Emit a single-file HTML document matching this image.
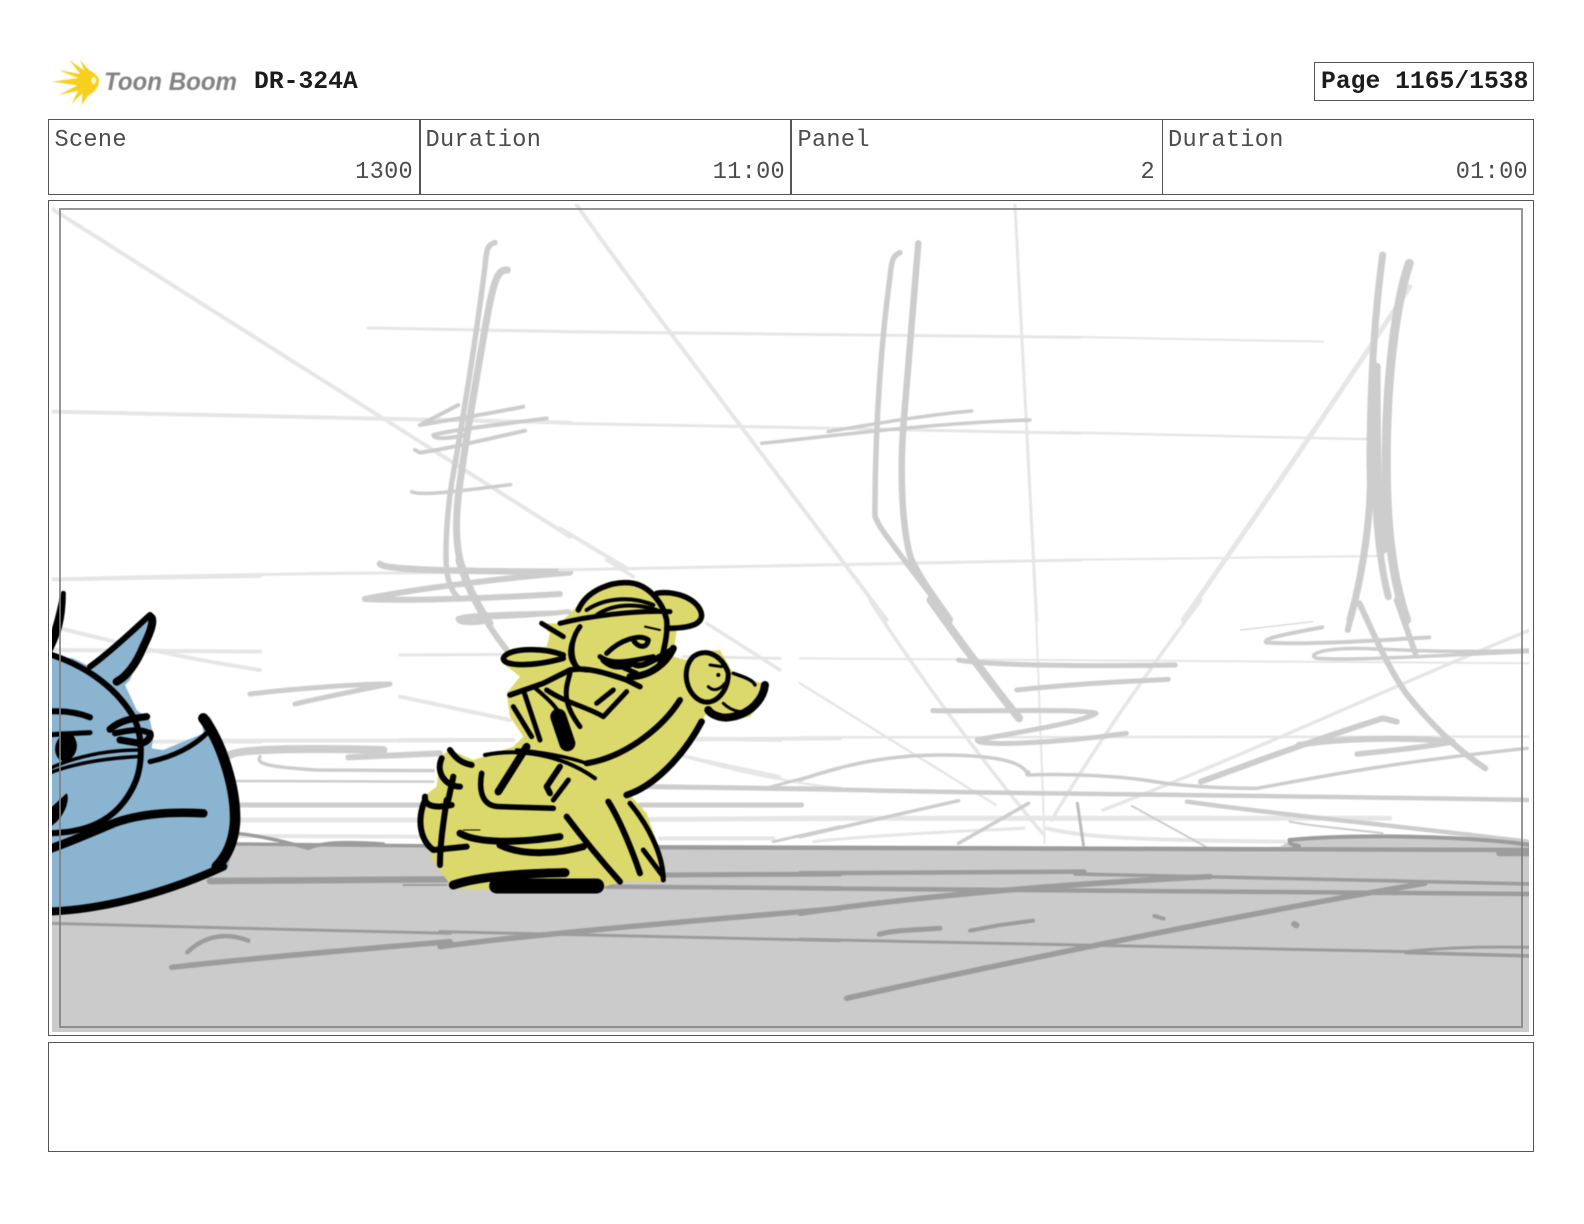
<!DOCTYPE html>
<html><head><meta charset="utf-8"><title>Storyboard page</title>
<style>
html,body{margin:0;padding:0;background:#fff;}
body{width:1584px;height:1224px;position:relative;overflow:hidden;font-family:"Liberation Mono",monospace;}
.box{position:absolute;border:1.5px solid #555;box-sizing:border-box;}
.t{position:absolute;font-size:23.6px;line-height:28px;color:#4c4c4c;white-space:pre;letter-spacing:.3px;}
.b{position:absolute;font-size:24.7px;line-height:28px;font-weight:bold;color:#1c1c1c;white-space:pre;}
.r{text-align:right;}
#art{position:absolute;left:52px;top:204px;width:1477px;height:828px;overflow:hidden;}
#art svg{position:absolute;left:-52px;top:-204px;filter:blur(.55px);}
svg path,svg ellipse,svg circle{vector-effect:non-scaling-stroke;}
.l{fill:none;stroke:#e6e6e6;stroke-linecap:round;stroke-linejoin:round;}
.m{fill:none;stroke:#cdcdcd;stroke-linecap:round;stroke-linejoin:round;}
.d{fill:none;stroke:#9c9c9c;stroke-linecap:round;stroke-linejoin:round;}
.k{fill:none;stroke:#000;stroke-linecap:round;stroke-linejoin:round;}
</style></head>
<body>

<svg style="position:absolute;left:0;top:0;filter:blur(.4px)" width="260" height="115" viewBox="0 0 260 115">
<g transform="translate(45 50) scale(.3333)">
<path fill="#f7cf1d" d="M22 95 L100 84 L40 60 L106 72 L73 30 L118 62 L105 30 L132 60 C152 70 162 82 162 92 C162 112 148 128 130 136 L110 165 L112 130 L80 160 L100 122 L40 135 L98 106 Z"/>
<ellipse cx="146" cy="92" rx="7" ry="11" fill="#fff6cc"/>
</g>
<text x="104" y="90" font-family="Liberation Sans" font-style="italic" font-weight="bold" font-size="25" fill="#828282" textLength="133" lengthAdjust="spacingAndGlyphs">Toon Boom</text>
</svg>

<div class="b" style="left:254px;top:68px;">DR-324A</div>
<div class="box" style="left:1314px;top:62px;width:219.5px;height:39px;"></div>
<div class="b" style="left:1321px;top:68px;">Page 1165/1538</div>

<div class="box" style="left:48px;top:119px;width:1486px;height:76px;"></div>
<div class="box" style="left:419px;top:119px;width:1.5px;height:76px;border:0;background:#555;"></div>
<div class="box" style="left:790px;top:119px;width:1.5px;height:76px;border:0;background:#555;"></div>
<div class="box" style="left:1161.5px;top:119px;width:1.5px;height:76px;border:0;background:#555;"></div>

<div class="t" style="left:54.5px;top:127px;">Scene</div>
<div class="t" style="left:425.5px;top:127px;">Duration</div>
<div class="t" style="left:797.5px;top:127px;">Panel</div>
<div class="t" style="left:1168px;top:127px;">Duration</div>
<div class="t r" style="left:219px;width:194px;top:158.5px;">1300</div>
<div class="t r" style="left:590px;width:195px;top:158.5px;">11:00</div>
<div class="t r" style="left:961px;width:194px;top:158.5px;">2</div>
<div class="t r" style="left:1332px;width:196px;top:158.5px;">01:00</div>

<div class="box" style="left:48px;top:200px;width:1486px;height:836px;"></div>

<div id="art">
<svg width="1584" height="1224" viewBox="0 0 1584 1224">
<g transform="translate(50 200) scale(.3333)">
<g class="l">
<path stroke-width="4" d="M8 28 L1560 1010"/>
<path stroke-width="4" d="M6 635 C400 645 800 655 1560 668"/>
<path stroke-width="3" d="M955 384 C1200 388 1400 392 1560 395"/>
<path stroke-width="3" d="M8 1138 C400 1125 800 1120 1190 1118"/>
</g>
<g class="m">
<path stroke-width="5.5" d="M1335 128 C1310 135 1310 150 1305 200 C1280 400 1240 650 1205 850 C1190 950 1185 1050 1190 1110 C1195 1150 1210 1180 1222 1190"/>
<path stroke-width="7" d="M1372 210 C1340 205 1330 260 1315 330 C1285 500 1250 700 1230 850 C1215 950 1215 1050 1240 1110 C1255 1160 1290 1230 1320 1270"/>
<path stroke-width="4" d="M1225 615 L1110 675 C1200 660 1350 635 1420 620"/>
<path stroke-width="4" d="M1490 655 C1380 670 1200 690 1150 705 C1150 720 1200 715 1250 705"/>
<path stroke-width="4" d="M1425 692 C1300 720 1200 745 1110 758 L1095 750"/>
<path stroke-width="3.5" d="M1085 875 C1110 890 1250 870 1382 854"/>
<path stroke-width="6.5" d="M990 1092 C1000 1112 1300 1115 1560 1115"/>
<path stroke-width="6" d="M1560 1118 C1400 1130 1100 1165 945 1197 C1100 1205 1400 1190 1530 1182"/>
<path stroke-width="3" d="M1560 1235 C1400 1240 1230 1240 1225 1255"/>
</g>
</g>
<g transform="translate(560 200) scale(.3333)">
<g class="l">
<path stroke-width="4" d="M50 15 C200 230 500 620 980 1260"/>
<path stroke-width="3" d="M0 395 L1560 412"/>
<path stroke-width="3" d="M0 670 L560 680 L1560 700"/>
<path stroke-width="3" d="M0 1110 L1560 1080"/>
<path stroke-width="4" d="M0 985 L200 1105"/>
<path stroke-width="3" d="M1365 15 L1430 1260"/>
</g>
<g class="m">
<path stroke-width="5.5" d="M1020 158 C1000 165 995 180 990 230 C965 420 945 650 945 950 L960 980 C1000 1040 1080 1140 1170 1260"/>
<path stroke-width="6.5" d="M1075 130 C1065 250 1050 450 1030 680 C1015 900 1040 1060 1060 1090 C1090 1150 1130 1200 1170 1260"/>
<path stroke-width="3.5" d="M605 730 C800 710 1100 670 1410 660"/>
<path stroke-width="3.5" d="M805 695 C950 670 1100 645 1235 633"/>
</g>
</g>
<g transform="translate(1060 200) scale(.3333)">
<g class="l">
<path stroke-width="2" d="M0 410 L790 425"/>
<path stroke-width="2.5" d="M0 697 L930 718"/>
<path stroke-width="2" d="M0 1080 L950 1068"/>
<path stroke-width="5" d="M1050 260 C800 640 600 930 370 1260"/>
</g>
<g class="m">
<path stroke-width="7" d="M968 165 C950 300 930 500 930 800 C935 900 920 1080 870 1260"/>
<path stroke-width="9" d="M1048 190 C1010 300 985 500 980 700 C975 900 985 1100 1040 1260"/>
<path stroke-width="7" d="M940 700 C945 900 950 1050 985 1190"/>
<path stroke-width="8" d="M950 500 C950 700 950 900 970 1050"/>
</g>
</g>
<g transform="translate(40 570) scale(.3333)" class="l">
<path stroke-width="4" d="M37 28 L660 18"/>
<path stroke-width="4" d="M60 175 C200 210 400 260 660 300"/>
<path stroke-width="4" d="M40 240 L660 245"/>
<path stroke-width="4" d="M340 515 L660 515"/>
</g>
<path class="m" stroke-width="5" d="M250 694 C300 688 360 684 390 684 C360 690 320 698 295 704"/>
<g transform="translate(400 560) scale(.3333)">
<g class="l">
<path stroke-width="3" d="M0 285 L310 283"/>
<path stroke-width="3" d="M850 290 L1140 295"/>
<path stroke-width="4" d="M0 540 L340 540"/>
<path stroke-width="4" d="M870 535 L1140 540"/>
<path stroke-width="4" d="M0 410 L330 480"/>
<path stroke-width="3" d="M860 590 L1140 650"/>
<path stroke-width="3.5" d="M620 0 L700 50"/>
<path stroke-width="3.5" d="M920 190 L1140 330"/>
</g>
<g class="m">
<path stroke-width="5" d="M505 155 C380 170 250 170 175 175 C170 190 220 190 250 185"/>
<path stroke-width="6" d="M175 0 C200 90 250 180 320 270"/>
</g>
</g>
<g transform="translate(50 720) scale(.3333)">
<g class="l">
<path stroke-width="4" d="M500 62 L1200 62"/>
<path stroke-width="5" d="M560 300 L1120 300"/>
<path stroke-width="4" d="M560 348 L1120 350"/>
</g>
<g class="m">
<path stroke-width="8" d="M540 105 C560 85 800 85 1000 90"/>
<path stroke-width="6" d="M895 112 L1170 100"/>
<path stroke-width="3.5" d="M630 110 C620 130 640 140 800 150 L1150 152"/>
<path stroke-width="2.5" d="M560 183 L1150 185"/>
<path stroke-width="5" d="M560 255 L1120 255"/>
</g>
</g>
<g transform="translate(440 730) scale(.3333)">
<g class="l">
<path stroke-width="4" d="M770 28 L1200 25"/>
<path stroke-width="2.5" d="M730 78 C900 130 1100 165 1200 175"/>
<path stroke-width="5" d="M630 268 L1200 265"/>
<path stroke-width="4" d="M660 325 L1000 325"/>
</g>
<g class="m">
<path stroke-width="5" d="M620 170 L1200 178"/>
<path stroke-width="3" d="M965 178 L1200 115"/>
<path stroke-width="5" d="M600 225 L1085 225"/>
<path stroke-width="3" d="M1000 335 L1200 290"/>
</g>
</g>
<g transform="translate(800 600) scale(.4662 .3333)">
<g class="l">
<path stroke-width="3.5" d="M150 0 C250 220 400 500 520 700"/>
<path stroke-width="2.5" d="M0 250 L420 615"/>
<path stroke-width="2" d="M505 0 L525 730"/>
<path stroke-width="3.5" d="M860 0 C780 150 640 420 540 660"/>
<path stroke-width="3.5" d="M1566 90 C1300 240 950 470 650 630"/>
<path stroke-width="2" d="M0 175 L1566 190"/>
<path stroke-width="2.5" d="M0 412 L1566 410"/>
<path stroke-width="5" d="M0 655 L1265 655"/>
<path stroke-width="3" d="M30 725 C200 700 400 690 480 685"/>
<path stroke-width="4" d="M530 685 C600 710 700 720 1040 725"/>
</g>
<g class="m">
<path stroke-width="8" d="M280 0 C320 80 420 270 470 355"/>
<path stroke-width="5" d="M340 180 C400 195 600 200 805 195"/>
<path stroke-width="5" d="M465 270 C600 250 700 245 790 238"/>
<path stroke-width="5" d="M285 332 C400 335 600 325 635 340 C600 370 450 400 380 420 C380 440 550 430 700 400"/>
<path stroke-width="3.5" d="M0 540 C100 490 200 465 300 465 C400 465 470 480 485 515 C500 515 480 525 490 525 C600 520 700 530 760 545 C830 560 900 565 980 565 C1100 535 1250 490 1560 445"/>
<path stroke-width="4.5" d="M0 565 C300 580 700 580 1566 600"/>
<path stroke-width="4.5" d="M830 605 C1000 640 1300 680 1560 725"/>
<path stroke-width="2" d="M1050 665 C1100 680 1200 690 1250 700"/>
<path stroke-width="3.5" d="M0 710 L340 602"/>
<path stroke-width="3.5" d="M340 730 L490 610"/>
<path stroke-width="3" stroke="#bbb" d="M595 610 L608 735"/>
<path stroke-width="2" d="M712 618 L870 740"/>
<path stroke-width="6" d="M1200 10 C1230 100 1260 200 1300 280 C1340 350 1400 440 1470 505"/>
<path stroke-width="6" d="M1190 0 L1175 90"/>
<path stroke-width="6" d="M1280 0 L1320 160"/>
<path stroke-width="4" d="M1120 82 C1050 100 990 115 1000 128 C1100 135 1250 120 1350 112"/>
<path stroke-width="1" d="M945 90 L1100 65"/>
<path stroke-width="3.5" d="M1566 150 C1400 160 1300 150 1200 145 C1100 145 1090 170 1110 175 C1200 182 1300 170 1566 155"/>
<path stroke-width="6" d="M860 545 C950 500 1080 430 1250 355 L1280 365"/>
<path stroke-width="6" d="M1070 435 C1150 415 1300 410 1400 425"/>
<path stroke-width="5.5" d="M1195 462 C1250 455 1350 440 1400 425"/>
</g>
</g>
<path fill="#cbcbcb" d="M40 845 L1540 849 L1540 1040 L40 1040 Z"/>
<path fill="#cbcbcb" transform="translate(800 600) scale(.4662 .3333)" d="M1030 740 L1060 715 C1200 700 1450 710 1566 730 L1566 750 Z"/>
<g transform="translate(800 600) scale(.4662 .3333)" class="d">
<path stroke-width="4.5" d="M-800 740 L1566 750"/>
<path stroke-width="4.5" d="M0 820 L610 815"/>
<path stroke-width="3.5" d="M590 822 C900 830 1300 845 1566 852"/>
<path stroke-width="5.5" d="M0 940 C300 880 600 850 880 830"/>
<path stroke-width="4.5" d="M0 865 C500 870 1000 875 1566 882"/>
<path stroke-width="5.5" d="M100 1195 C500 1070 1000 930 1340 850"/>
<path stroke-width="3" d="M0 1018 C500 1030 1000 1050 1300 1055 C1400 1040 1500 1040 1566 1042"/>
<path stroke-width="3.5" d="M1300 1058 L1566 1068"/>
<path stroke-width="5" d="M170 1003 C200 990 250 990 300 985"/>
<path stroke-width="4" d="M365 992 L430 975 L500 962"/>
<path stroke-width="4" d="M760 948 L780 956"/>
<path stroke-width="6" d="M1060 972 L1065 976"/>
<path stroke-width="4" d="M1566 735 C1450 710 1200 700 1050 720 C1050 735 1060 735 1070 738"/>
<path stroke-width="6" d="M1500 760 L1566 760"/>
</g>
<g transform="translate(50 720) scale(.3333)" class="d">
<path stroke-width="3.5" d="M560 340 C650 350 720 370 775 385 C820 365 900 365 1000 372"/>
<path stroke-width="3.5" d="M560 372 L1200 378"/>
<path stroke-width="6.5" d="M480 483 L1190 478"/>
<path stroke-width="2" d="M1060 495 L1190 495"/>
<path stroke-width="3" d="M6 610 C300 620 800 630 1200 640"/>
<path stroke-width="4.5" d="M412 697 C470 640 540 640 595 662"/>
<path stroke-width="5.5" d="M365 742 C600 715 900 690 1200 665"/>
</g>
<g transform="translate(440 730) scale(.3333)" class="d">
<path stroke-width="5" d="M680 435 L1200 432"/>
<path stroke-width="4.5" d="M500 470 L1200 475"/>
<path stroke-width="5.5" d="M0 650 C300 610 800 570 1200 535"/>
<path stroke-width="3" d="M0 605 C400 615 800 625 1200 632"/>
</g>
<g transform="translate(400 560) scale(.3333)">
<path fill="#dcd96c" d="M530 140 L560 100 L640 65 L720 70 L770 100 L840 100 L900 140 L905 185 L830 210 L820 290 L860 300 L890 275 L960 270 L1000 340 L1070 365 L1105 375 L1090 420 L1050 470 L990 480 L920 460 L900 490 L800 620 L690 705 L740 760 L790 900 L800 965 L660 965 L600 985 L300 990 L160 985 L110 920 L60 810 L70 710 L110 680 L120 590 L150 570 L220 600 L340 560 L370 530 L330 470 L320 400 L360 350 L310 310 L320 270 L440 260 L450 220 L420 190 L480 190 Z"/>
<g class="k">
<path stroke-width="5.5" d="M535 150 C560 90 640 60 700 70 C750 80 790 130 800 180 C805 220 790 280 780 310"/>
<path stroke-width="5.5" d="M770 100 C830 90 900 120 905 165 C905 200 850 205 800 205"/>
<path stroke-width="5" d="M425 190 L490 230"/>
<path stroke-width="5" d="M480 190 C560 170 700 150 810 155"/>
<path stroke-width="4" d="M560 150 C620 110 700 110 760 135"/>
<path stroke-width="4" d="M590 165 C640 130 710 130 770 150"/>
<path stroke-width="5" d="M520 240 C500 290 520 330 560 330"/>
<path stroke-width="5" d="M540 200 C510 240 510 290 530 320"/>
<path stroke-width="5" d="M620 280 C660 240 720 220 745 240 C740 270 710 260 700 240"/>
<path stroke-width="5" d="M600 290 C640 320 700 300 760 290"/>
<path stroke-width="6" d="M610 300 C640 330 680 320 700 310 C720 330 760 300 815 270"/>
<path stroke-width="7" d="M690 350 C750 350 800 310 820 265"/>
<path stroke-width="5" d="M640 310 L710 340"/>
<path stroke-width="2" d="M735 200 L780 210"/>
<path stroke-width="5.5" d="M490 285 C420 260 320 265 310 295 C310 320 400 320 490 295"/>
<path stroke-width="5.5" d="M330 405 L430 370 L510 330 C560 320 620 340 680 360 L720 380"/>
<path stroke-width="5" d="M510 340 C500 380 480 420 540 500"/>
<path stroke-width="5" d="M370 390 L420 540"/>
<path stroke-width="5" d="M340 440 L395 530"/>
<path stroke-width="5" d="M440 390 C500 430 560 440 610 470 L680 395"/>
<path stroke-width="4" d="M400 380 C450 420 480 450 500 500"/>
<path stroke-width="16" d="M475 470 L502 550"/>
<path stroke-width="5" d="M590 430 L640 390"/>
<path stroke-width="6" d="M560 610 C680 590 790 500 840 420"/>
<path stroke-width="6.5" d="M680 705 C760 680 850 590 905 485"/>
<path stroke-width="5" d="M985 340 C970 290 920 260 880 290 C840 330 860 410 910 425 C950 435 985 390 985 340"/>
<path stroke-width="3" d="M930 315 L965 320"/>
<circle cx="955" cy="345" r="6" fill="#000" stroke="none"/>
<path stroke-width="3" d="M925 380 C940 395 960 390 975 370"/>
<path stroke-width="3.5" d="M1000 340 C1030 350 1060 360 1065 375"/>
<path stroke-width="8" d="M1095 375 C1090 420 1050 460 1000 470 C960 480 930 460 925 450"/>
<path stroke-width="3" d="M970 430 C1000 460 1040 460 1060 450"/>
<path stroke-width="4" d="M255 585 C350 565 480 580 585 655"/>
<path stroke-width="3.5" d="M560 610 C500 590 420 575 350 570"/>
<path stroke-width="7.5" d="M380 560 L295 695"/>
<path stroke-width="5.5" d="M245 640 C235 700 250 740 300 740 L460 745"/>
<path stroke-width="6" d="M480 620 L440 680 L450 700"/>
<path stroke-width="5" d="M505 660 L460 720"/>
<path stroke-width="6" d="M150 570 C170 600 190 610 215 615"/>
<path stroke-width="6" d="M125 595 C105 640 140 680 180 680"/>
<path stroke-width="6" d="M160 650 L145 720"/>
<path stroke-width="6" d="M75 710 C70 740 110 745 155 735"/>
<path stroke-width="6" d="M140 720 C130 790 120 850 120 915"/>
<path stroke-width="6" d="M75 720 C50 780 60 840 100 870 L200 860"/>
<path stroke-width="7" d="M180 820 C230 850 350 850 480 830"/>
<path stroke-width="7" d="M300 855 C370 890 480 880 550 860"/>
<path stroke-width="1" d="M190 810 L240 810"/>
<path stroke-width="6" d="M500 770 C560 850 620 920 660 965"/>
<path stroke-width="6" d="M625 725 C660 780 700 880 720 940"/>
<path stroke-width="5" d="M690 730 C740 790 790 880 790 960"/>
<path stroke-width="5" d="M730 870 L790 950"/>
<path stroke-width="9" d="M160 975 C250 945 400 940 495 938"/>
<path stroke-width="15" d="M290 978 L590 978"/>
</g>
</g>
<g transform="translate(40 570) scale(.3333)">
<path fill="#8ab4d0" d="M36 260 L100 265 L150 290 L180 260 L250 200 L330 140 L320 200 L270 330 L255 345 L290 420 L330 450 L340 500 L335 535 L370 540 L490 490 L485 445 L510 440 L560 540 L590 700 L580 830 L565 890 L500 920 L300 985 L150 1020 L20 1035 L20 260 Z"/>
<g class="k">
<path stroke-width="6" d="M20 250 C120 280 220 340 280 440 C310 500 310 590 280 650 C240 730 170 790 20 790"/>
<path stroke-width="5" fill="#000" d="M20 240 C50 170 60 110 70 70 C70 140 60 190 20 260 Z"/>
<path stroke-width="6" d="M150 290 C220 240 290 170 330 135"/>
<path stroke-width="8" d="M330 140 C345 145 335 180 310 230 C290 280 260 320 230 335"/>
<path stroke-width="10.5" d="M490 445 C540 510 590 650 585 760 C580 820 560 860 530 890"/>
<path stroke-width="8" d="M20 1025 C200 1020 400 960 550 890"/>
<path stroke-width="5" d="M330 575 C400 560 460 530 500 490"/>
<path stroke-width="8.5" d="M490 730 C400 725 300 730 220 760 C150 790 80 820 20 840"/>
<path stroke-width="6" d="M20 425 C80 420 120 430 150 442"/>
<path stroke-width="7" d="M210 478 C240 450 280 445 320 440"/>
<path stroke-width="6" d="M225 490 C270 480 300 475 330 490"/>
<path stroke-width="7" d="M240 510 L300 520 C320 520 335 500 330 490"/>
<path stroke-width="5" d="M20 495 C80 490 120 490 150 488"/>
<path stroke-width="3.5" d="M20 600 C100 560 200 540 300 540"/>
<path stroke-width="3.5" d="M20 612 C100 580 200 565 290 560"/>
</g>
<ellipse cx="78" cy="532" rx="32" ry="42" fill="#000" transform="rotate(15 78 532)"/>
<path fill="#8ab4d0" d="M105 505 L125 505 L115 530 Z"/>
<path fill="#000" d="M20 725 L80 670 C92 690 70 755 20 775 Z"/>
</g>
</svg>
</div>

<div class="box" style="left:59px;top:208px;width:1464px;height:820px;border:2px solid rgba(125,125,125,.8);"></div>

<div class="box" style="left:48px;top:1041.5px;width:1486px;height:110.5px;"></div>

</body></html>
